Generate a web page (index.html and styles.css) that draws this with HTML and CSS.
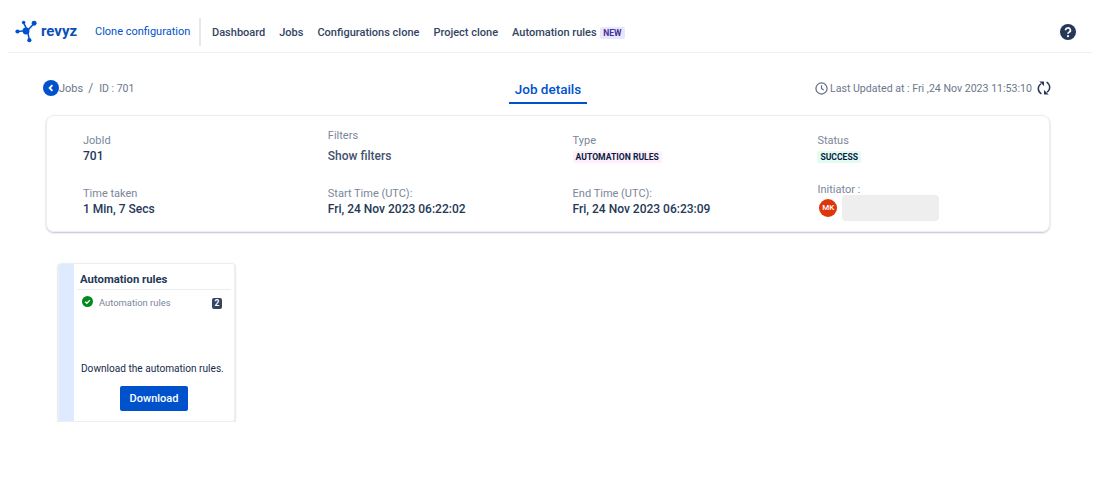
FILE: index.html
```html
<!DOCTYPE html>
<html lang="en">
<head>
  <meta charset="UTF-8" />
  <meta name="viewport" content="width=device-width, initial-scale=1.0"/>
  <title>Job details</title>
  <link rel="stylesheet" href="styles.css">
</head>
<body>

  <header class="topbar">
    <div class="logo">
      <svg class="logo-mark" width="23" height="23" viewBox="0 0 24 24">
        <g stroke="#0052cc" stroke-width="1.6">
          <line x1="3" y1="12" x2="13" y2="11"/>
          <line x1="13" y1="11" x2="9" y2="3"/>
          <line x1="13" y1="11" x2="20" y2="3.5"/>
          <line x1="13" y1="11" x2="15" y2="21"/>
        </g>
        <g fill="#0052cc">
          <circle cx="2.6" cy="12" r="2.2"/>
          <circle cx="11.5" cy="11.5" r="3.6"/>
          <circle cx="9" cy="2.6" r="1.8"/>
          <circle cx="20" cy="3.5" r="2.6"/>
          <circle cx="15" cy="21" r="2.2"/>
        </g>
      </svg>
      <span class="logo-text">revyz</span>
    </div>
    <a class="app-name">Clone configuration</a>
    <nav class="nav">
      <a>Dashboard</a>
      <a>Jobs</a>
      <a>Configurations clone</a>
      <a>Project clone</a>
      <a>Automation rules <span class="new-tag">NEW</span></a>
    </nav>
    <svg class="help" width="16" height="16" viewBox="0 0 16 16">
      <circle cx="8" cy="8" r="8" fill="#253858"/>
      <path d="M5.6 6.2a2.4 2.2 0 1 1 3.6 1.9c-.8.5-1.2.8-1.2 1.7" fill="none" stroke="#fff" stroke-width="1.7"/>
      <circle cx="8" cy="12.2" r="1.1" fill="#fff"/>
    </svg>
  </header>

  <section class="subhead">
    <div class="crumbs">
      <span class="back">
        <svg width="16" height="16" viewBox="0 0 16 16">
          <circle cx="8" cy="8" r="8" fill="#0052cc"/>
          <path d="M9.4 5.2 6.6 8l2.8 2.8" fill="none" stroke="#fff" stroke-width="1.8"/>
        </svg>
      </span>
      <span class="crumb-jobs">Jobs</span>
      <span class="crumb-sep">/</span>
      <span class="crumb-id">ID : 701</span>
    </div>
    <h1 class="title">Job details</h1>
    <div class="updated">
      <svg width="13" height="13" viewBox="0 0 14 14">
        <circle cx="7" cy="7" r="6" fill="none" stroke="#5e6c84" stroke-width="1.3"/>
        <path d="M7 3.4V7l2.4 1.6" fill="none" stroke="#5e6c84" stroke-width="1.3"/>
      </svg>
      <span>Last Updated at : Fri ,24 Nov 2023 11:53:10</span>
      <svg class="refresh" width="14" height="14" viewBox="0 0 14 14">
        <g fill="none" stroke="#253858" stroke-width="1.5">
          <path d="M4.4 13C2 11.2 1 9 1.4 6.6 1.7 5 2.6 3.6 4 2.8"/>
          <path d="M9.6 1c2.4 1.8 3.4 4 3 6.4-.3 1.6-1.2 3-2.6 3.8"/>
        </g>
        <path d="M2.4.4H7V5zM11.6 13.6H7V9z" fill="#253858"/>
      </svg>
    </div>
  </section>

  <section class="summary">
    <div class="field">
      <div class="label">JobId</div>
      <div class="value">701</div>
    </div>
    <div class="field field-filters">
      <div class="label">Filters</div>
      <div class="value link">Show filters</div>
    </div>
    <div class="field">
      <div class="label">Type</div>
      <div class="value"><span class="lozenge pink">AUTOMATION RULES</span></div>
    </div>
    <div class="field">
      <div class="label">Status</div>
      <div class="value"><span class="lozenge green">SUCCESS</span></div>
    </div>
    <div class="field">
      <div class="label">Time taken</div>
      <div class="value">1 Min, 7 Secs</div>
    </div>
    <div class="field">
      <div class="label">Start Time (UTC):</div>
      <div class="value">Fri, 24 Nov 2023 06:22:02</div>
    </div>
    <div class="field">
      <div class="label">End Time (UTC):</div>
      <div class="value">Fri, 24 Nov 2023 06:23:09</div>
    </div>
    <div class="field field-initiator">
      <div class="label">Initiator :</div>
      <div class="user">
        <span class="avatar">MK</span>
        <span class="redacted"></span>
      </div>
    </div>
  </section>

  <section class="task">
    <div class="task-band"></div>
    <div class="task-body">
      <div class="task-title">Automation rules</div>
      <div class="task-row">
        <svg width="11" height="11" viewBox="0 0 12 12">
          <circle cx="6" cy="6" r="6" fill="#008a1e"/>
          <path d="M3.4 6.2 5.3 8l3.3-3.5" fill="none" stroke="#fff" stroke-width="1.5"/>
        </svg>
        <span class="task-name">Automation rules</span>
        <span class="count">2</span>
      </div>
      <p class="task-note">Download the automation rules.</p>
      <button class="download">Download</button>
    </div>
  </section>

</body>
</html>
```

FILE: styles.css
```css
* {
  box-sizing: border-box;
}

body {
  margin: 0;
  font-family: Roboto, "Noto Sans", sans-serif;
  background-color: #fff;
  color: #172b4d;
}

.topbar {
  display: flex;
  align-items: center;
  height: 53px;
  margin: 0 11px 0 8px;
  padding: 12px 0 0 7px;
  border-bottom: 1px solid #f0f1f3;
}

.logo {
  display: flex;
  align-items: center;
  width: 80px;
  padding-bottom: 2px;
}

.logo-text {
  margin-left: 3px;
  font-size: 15px;
  font-weight: 700;
  color: #0b4fb8;
}

.app-name {
  width: 106px;
  height: 28px;
  line-height: 28px;
  font-size: 11px;
  color: #0052cc;
  border-right: 2px solid #e6e8ec;
}

.nav {
  display: flex;
  align-items: center;
  gap: 14px;
  margin-left: 11px;
  font-size: 11px;
  font-weight: 500;
  color: #344563;
}

.new-tag {
  margin-left: 1px;
  padding: 1px 3px;
  font-size: 8.5px;
  font-weight: 700;
  color: #403294;
  background-color: #eae6ff;
  border-radius: 2px;
}

.help {
  margin-left: auto;
  margin-right: 16px;
}

.subhead {
  display: grid;
  grid-template-columns: 1fr auto 1fr;
  align-items: start;
  height: 62px;
  margin: 0 52px 0 43px;
  padding-top: 26px;
}

.crumbs {
  display: flex;
  align-items: center;
  height: 18px;
  font-size: 11px;
  color: #6b778c;
}

.back {
  display: flex;
}

.crumb-sep {
  margin: 0 6px 0 5px;
  font-size: 12px;
}

.crumb-id {
  font-size: 10.5px;
}

.title {
  margin: 0 0 0 2px;
  height: 25px;
  padding: 0 6px;
  font-size: 13.5px;
  line-height: 20px;
  font-weight: 500;
  color: #0052cc;
  border-bottom: 2px solid #0052cc;
}

.updated {
  display: flex;
  align-items: center;
  justify-content: flex-end;
  gap: 2px;
  height: 18px;
  font-size: 10.6px;
  color: #6b778c;
}

.refresh {
  margin-left: 3px;
}

.summary {
  display: grid;
  grid-template-columns: repeat(4, 244.8px);
  grid-template-rows: 53px 53px;
  width: 1004px;
  height: 117px;
  margin-left: 46px;
  padding: 17px 0 0 36px;
  border: 1px solid #eceef1;
  border-radius: 8px;
  box-shadow: 0 1px 2px rgba(9, 30, 66, 0.28);
}

.label {
  font-size: 11px;
  line-height: 15px;
  color: #7a869a;
}

.value {
  font-size: 12px;
  line-height: 17px;
  font-weight: 500;
  color: #253858;
}

.field-filters {
  margin-top: -5px;
}

.field-filters .value {
  margin-top: 5px;
}

.link {
  color: #42526e;
}

.lozenge {
  display: inline-block;
  padding: 0 3px;
  font-size: 8.6px;
  line-height: 12px;
  font-weight: 700;
  color: #091e42;
  border-radius: 2px;
}

.pink {
  background-color: #ffeefb;
}

.green {
  background-color: #e3fcef;
}

.field-initiator {
  margin-top: -4px;
}

.user {
  display: flex;
  align-items: center;
  gap: 5px;
  margin: -2px 0 0 2px;
}

.avatar {
  width: 18px;
  height: 18px;
  line-height: 18px;
  text-align: center;
  font-size: 8px;
  font-weight: 500;
  color: #fff;
  background-color: #de350b;
  border-radius: 50%;
}

.redacted {
  width: 97px;
  height: 26px;
  background-color: #eeeeee;
  border-radius: 4px;
}

.task {
  display: flex;
  width: 177px;
  height: 159px;
  margin: 31px 0 0 58px;
  border: 1px solid #eceef1;
  border-radius: 3px;
  box-shadow: 0 1px 2px rgba(9, 30, 66, 0.3);
}

.task-band {
  width: 15px;
  background-color: #deebff;
}

.task-body {
  flex: 1;
  padding: 0 3px;
  display: flex;
  flex-direction: column;
}

.task-title {
  height: 26px;
  padding: 9px 0 0 3px;
  font-size: 11.3px;
  font-weight: 700;
  color: #253858;
  border-bottom: 1px solid #ebecf0;
}

.task-row {
  display: flex;
  align-items: flex-start;
  padding: 6px 9px 0 5px;
}

.task-name {
  margin-left: 6px;
  font-size: 9.4px;
  line-height: 13px;
  color: #7a869a;
}

.count {
  margin-left: auto;
  margin-top: 2px;
  width: 10px;
  height: 11px;
  line-height: 11px;
  text-align: center;
  font-size: 8.5px;
  font-weight: 700;
  color: #fff;
  background-color: #344563;
  border-radius: 2px;
}

.task-note {
  margin: 53px 0 0 4px;
  font-size: 10.1px;
  line-height: 14px;
  color: #172b4d;
  white-space: nowrap;
}

.download {
  align-self: center;
  width: 68px;
  height: 25px;
  margin-top: 10px;
  font-family: inherit;
  font-size: 11px;
  font-weight: 500;
  color: #fff;
  background-color: #0052cc;
  border: none;
  border-radius: 2px;
}
```
